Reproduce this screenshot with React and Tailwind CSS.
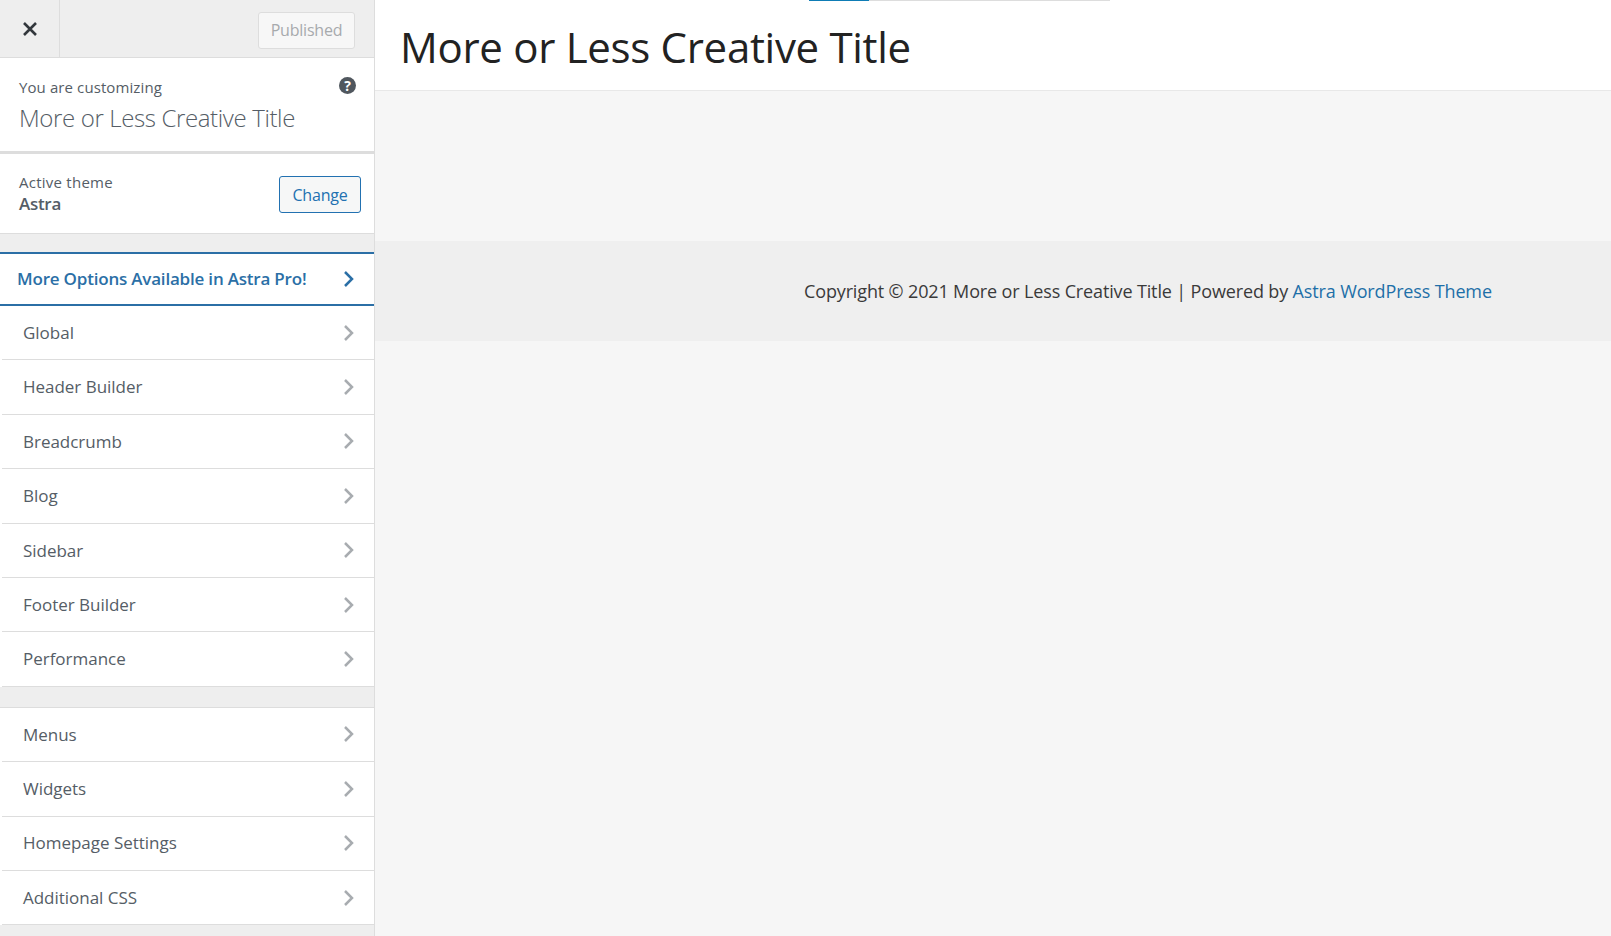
const font = { fontFamily: '"Open Sans", sans-serif' }

const groupOne = ['Global', 'Header Builder', 'Breadcrumb', 'Blog', 'Sidebar', 'Footer Builder', 'Performance']
const groupTwo = ['Menus', 'Widgets', 'Homepage Settings', 'Additional CSS']

function Chevron({ className }) {
  return (
    <svg width="12" height="18" viewBox="0 0 12 18" className={className}>
      <path d="M2 2 9 9 2 16" stroke="currentColor" strokeWidth="2.5" fill="none" />
    </svg>
  )
}

function Row({ label }) {
  return (
    <div className="bg-white pl-[2px]">
      <div className="flex h-[54.4px] items-center justify-between border-b border-[#ddd] pr-[19px] pl-[21px]">
        <span className="text-[17px] tracking-[-0.02px] text-[#555d66]">{label}</span>
        <Chevron className="text-[#a8acb0]" />
      </div>
    </div>
  )
}

function Sidebar() {
  return (
    <aside className="flex h-full w-[375px] shrink-0 flex-col overflow-hidden border-r border-[#ddd] bg-[#eee]">
      {/* barra de cima */}
      <div className="flex h-[58px] shrink-0 items-center justify-between border-b border-[#ddd] pr-[19px]">
        <div className="flex h-full w-[60px] items-center justify-center border-r border-[#ddd]">
          <svg width="16" height="16" viewBox="0 0 16 16" className="text-[#32373c]">
            <path d="M2 2 14 14M14 2 2 14" stroke="currentColor" strokeWidth="2.6" fill="none" />
          </svg>
        </div>
        <div className="mt-[3px] flex h-[37px] w-[97px] items-center justify-center rounded-[3px] border border-[#ddd] bg-[#f7f7f7] text-[16px] tracking-[-0.2px] text-[#a7aaad]">
          Published
        </div>
      </div>

      <div className="relative h-[96px] shrink-0 border-b-[3px] border-[#ddd] bg-white pt-[19px] pl-[19px]">
        <p className="text-[15px] leading-[20px] tracking-[0.1px] text-[#555d66]">You are customizing</p>
        <p className="mt-[5px] text-[24px] leading-[32px] font-light tracking-[-0.37px] text-[#555d66]">More or Less Creative Title</p>
        <span className="absolute top-[19px] right-[18px] flex h-[17px] w-[17px] items-center justify-center rounded-full bg-[#50575e] text-[14px] leading-none font-bold text-white">
          ?
        </span>
      </div>

      <div className="flex h-[80px] shrink-0 items-center justify-between border-b border-[#ddd] bg-white pr-[13px] pl-[19px]">
        <div>
          <p className="-mt-[1px] text-[15px] leading-[20px] tracking-[0.25px] text-[#555d66]">Active theme</p>
          <p className="mt-[1px] text-[17px] leading-[22px] font-semibold tracking-[-0.3px] text-[#555d66]">Astra</p>
        </div>
        <div className="mt-[2px] flex h-[37px] w-[82px] items-center justify-center rounded-[3px] border border-[#2271b1] bg-[#f6f7f7] text-[16px] tracking-[-0.2px] text-[#2271b1]">
          Change
        </div>
      </div>

      <div className="mt-[18px] flex h-[54px] shrink-0 items-center justify-between border-y-2 border-[#2b6fa6] bg-white pr-[19px] pl-[17px]">
        <span className="text-[17px] font-semibold tracking-[-0.2px] text-[#2b6fa6]">More Options Available in Astra Pro!</span>
        <Chevron className="text-[#2b6fa6]" />
      </div>

      {groupOne.map((label) => (
        <Row key={label} label={label} />
      ))}

      <div className="mt-[20px] border-t border-[#ddd]">
        {groupTwo.map((label) => (
          <Row key={label} label={label} />
        ))}
      </div>
    </aside>
  )
}

export default function App() {
  return (
    <div className="flex h-[936px] w-[1611px] overflow-hidden bg-[#f6f6f6]" style={font}>
      <Sidebar />
      <main className="flex min-w-0 flex-1 flex-col">
        <header className="relative h-[91px] shrink-0 border-b border-[#e8e8e8] bg-white pl-[25px]">
          <div className="absolute top-0 left-[434px] flex h-[1px]">
            <div className="w-[60px] bg-[#0e7cb5]" />
            <div className="w-[241px] bg-[#ddd]" />
          </div>
          <h1 className="pt-[17px] text-[42px] leading-[60px] font-normal tracking-[-0.3px] text-[#222]">More or Less Creative Title</h1>
        </header>
        <div className="mt-[150px] flex h-[100px] items-center bg-[#efefef] pl-[429px]">
          <p className="text-[18px] tracking-[-0.14px] text-[#3a3a3a]">
            Copyright © 2021 More or Less Creative Title | Powered by <span className="text-[#1e6fa8]">Astra WordPress Theme</span>
          </p>
        </div>
      </main>
    </div>
  )
}
